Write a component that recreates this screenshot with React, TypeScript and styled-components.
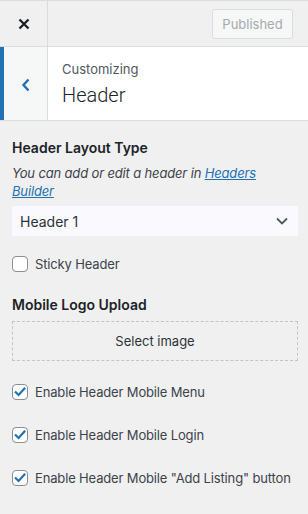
import styled, { createGlobalStyle } from "styled-components";

const GlobalStyle = createGlobalStyle`
  html, body {
    margin: 0;
    padding: 0;
    background: #f0f0f1;
  }
  body {
    font-family: Inter, "Noto Sans", sans-serif;
    color: #3c434a;
  }
  * {
    box-sizing: border-box;
  }
`;

function CheckIcon() {
  return (
    <svg width="14" height="14" viewBox="0 0 14 14">
      <path d="M2.8 7.2 L5.6 10 L11.4 3.6" fill="none" stroke="#2271b1" strokeWidth="2.2" strokeLinecap="square" />
    </svg>
  );
}

function CloseIcon() {
  return (
    <svg width="14" height="14" viewBox="0 0 14 14">
      <path d="M2.5 2.5 L11.5 11.5 M11.5 2.5 L2.5 11.5" stroke="#1d2327" strokeWidth="2.4" />
    </svg>
  );
}

function BackIcon() {
  return (
    <svg width="12" height="16" viewBox="0 0 12 16">
      <path d="M8.5 2.5 L3.5 8 L8.5 13.5" fill="none" stroke="#2271b1" strokeWidth="2.4" />
    </svg>
  );
}

function ChevronDown() {
  return (
    <svg width="14" height="10" viewBox="0 0 14 10">
      <path d="M2 2.5 L7 7.5 L12 2.5" fill="none" stroke="#50575e" strokeWidth="1.8" />
    </svg>
  );
}

function Checkbox({ checked, label }: { checked?: boolean; label: string }) {
  return (
    <CheckRow>
      <Box>{checked && <CheckIcon />}</Box>
      <span>{label}</span>
    </CheckRow>
  );
}

export default function App() {
  return (
    <>
      <GlobalStyle />
      <Panel>
        <TopBar>
          <CloseButton>
            <CloseIcon />
          </CloseButton>
          <Spacer />
          <PublishButton>Published</PublishButton>
        </TopBar>
        <SectionHeader>
          <BackButton>
            <BackIcon />
          </BackButton>
          <TitleBlock>
            <Small>Customizing</Small>
            <Title>Header</Title>
          </TitleBlock>
        </SectionHeader>
        <Content>
          <Control className="first">
            <Label>Header Layout Type</Label>
            <Description>
              You can add or edit a header in <a href="#">Headers Builder</a>
            </Description>
            <Select>
              <span>Header 1</span>
              <ChevronDown />
            </Select>
          </Control>
          <Control className="sticky">
            <Checkbox label="Sticky Header" />
          </Control>
          <Control className="logo">
            <Label>Mobile Logo Upload</Label>
            <UploadBox>Select image</UploadBox>
          </Control>
          <Control className="check">
            <Checkbox checked label="Enable Header Mobile Menu" />
          </Control>
          <Control className="check">
            <Checkbox checked label="Enable Header Mobile Login" />
          </Control>
          <Control className="check">
            <Checkbox checked label='Enable Header Mobile "Add Listing" button' />
          </Control>
        </Content>
      </Panel>
    </>
  );
}

const Panel = styled.div`
  width: 308px;
  min-height: 514px;
  background: #f0f0f1;
  border-top: 1px solid #dcdcde;
`;

const TopBar = styled.div`
  display: flex;
  align-items: center;
  height: 46px;
  border-bottom: 1px solid #dcdcde;
`;

const CloseButton = styled.div`
  display: flex;
  align-items: center;
  justify-content: center;
  width: 48px;
  height: 100%;
  border-right: 1px solid #dcdcde;
`;

const Spacer = styled.div`
  flex: 1;
`;

const PublishButton = styled.div`
  display: flex;
  align-items: center;
  justify-content: center;
  width: 81px;
  height: 30px;
  margin-right: 15px;
  margin-top: 1px;
  border: 1px solid #dcdcde;
  border-radius: 3px;
  background: #f6f7f7;
  color: #a7aaad;
  font-size: 13px;
`;

const SectionHeader = styled.div`
  display: flex;
  height: 74px;
  background: #fff;
  border-bottom: 1px solid #dcdcde;
`;

const BackButton = styled.div`
  display: flex;
  align-items: center;
  justify-content: center;
  width: 48px;
  background: #f6f7f7;
  border-left: 4px solid #2271b1;
  border-right: 1px solid #dcdcde;
  padding-top: 2px;
`;

const TitleBlock = styled.div`
  display: flex;
  flex-direction: column;
  justify-content: center;
  padding-left: 14px;
  padding-bottom: 0;
`;

const Small = styled.div`
  font-size: 13px;
  line-height: 18px;
  color: #50575e;
`;

const Title = styled.div`
  font-family: Roboto, Inter, sans-serif;
  font-size: 20px;
  font-weight: 300;
  line-height: 26px;
  margin-top: 4px;
  color: #1d2327;
`;

const Content = styled.div`
  display: flex;
  flex-direction: column;
  padding: 0 10px 0 12px;
`;

const Control = styled.div`
  display: flex;
  flex-direction: column;

  &.first {
    padding-top: 17px;
  }
  &.sticky {
    margin-top: 19px;
  }
  &.logo {
    margin-top: 22px;
  }
  &.check {
    margin-top: 25px;
  }
  &.logo + &.check {
    margin-top: 22px;
  }
`;

const Label = styled.div`
  font-size: 14px;
  font-weight: 600;
  line-height: 20px;
  color: #1d2327;
  margin-bottom: 6px;
`;

const Description = styled.div`
  font-size: 13px;
  font-style: italic;
  line-height: 18px;
  letter-spacing: -0.15px;
  color: #3c434a;
  margin-bottom: 6px;

  a {
    color: #2271b1;
  }
`;

const Select = styled.div`
  display: flex;
  align-items: center;
  justify-content: space-between;
  height: 30px;
  padding: 0 9px 0 8px;
  background: #f9f9fe;
  font-size: 14px;
  color: #2c3338;
`;

const UploadBox = styled.div`
  display: flex;
  align-items: center;
  justify-content: center;
  height: 40px;
  border: 1px dashed #c3c4c7;
  font-size: 13px;
  color: #2c3338;
`;

const CheckRow = styled.label`
  display: flex;
  align-items: center;
  gap: 7px;
  font-size: 13px;
  line-height: 18px;
  letter-spacing: -0.15px;
  white-space: nowrap;
  color: #3c434a;
`;

const Box = styled.span`
  display: flex;
  align-items: center;
  justify-content: center;
  flex-shrink: 0;
  width: 16px;
  height: 16px;
  border: 1px solid #8c8f94;
  border-radius: 4px;
  background: #fff;
`;
